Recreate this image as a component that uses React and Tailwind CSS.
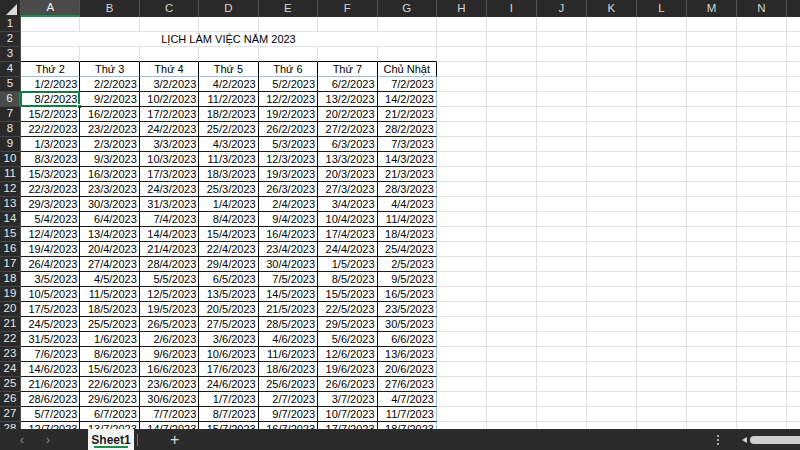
import { useMemo } from "react"

const LETTERS = ["A", "B", "C", "D", "E", "F", "G", "H", "I", "J", "K", "L", "M", "N", "O"]
const DAYS = ["Thứ 2", "Thứ 3", "Thứ 4", "Thứ 5", "Thứ 6", "Thứ 7", "Chủ Nhật"]

function colWidth(i) {
	return i < 7 ? "w-[59.43px]" : "w-[50px]"
}

function fmt(i) {
	const d = new Date(Date.UTC(2023, 1, 1 + i))
	return `${d.getUTCDate()}/${d.getUTCMonth() + 1}/${d.getUTCFullYear()}`
}

function RowHead({ n, active }) {
	return (
		<div
			className={`${active ? "bg-[#4b4b4b] border-r-2 border-r-[#1e8c4e]" : "bg-[#2a2a2a] border-r border-r-[#505050]"} w-[21px] shrink-0 h-full flex items-center justify-center text-[#e6e6e6] text-[11.5px] border-b border-b-[#454545]`}
		>
			{n}
		</div>
	)
}

function Cell({ i, row, children }) {
	// borders of the bordered block A4:G28
	let border = "border-r border-b border-[#e1e1e1]"
	let align = "justify-end pr-[2px]"
	if (row === 3 && i < 7) border = "border-r border-[#e1e1e1] border-b border-b-black"
	if (row === 4 && i < 7) {
		border = "border-r border-r-black border-b border-b-[#9dbfe4]"
		align = "justify-center"
	}
	if (row >= 5 && i < 7) {
		border = `border-r ${i === 6 ? "border-r-[#9dbfe4]" : "border-r-black"} border-b border-b-[#1a1a1a]`
	}
	return (
		<div
			className={`${colWidth(i)} shrink-0 h-full flex items-center ${align} ${border} relative pt-[1px]`}
		>
			{children}
			{row === 6 && i === 0 && (
				<div className="absolute -left-[1px] -top-[1px] -right-[1px] -bottom-[1px] border-2 border-[#107c41]">
					<div className="absolute -right-[4px] -bottom-[4px] w-[5px] h-[5px] bg-[#107c41] border border-white"></div>
				</div>
			)}
		</div>
	)
}

function App() {
	const rows = useMemo(() => {
		const out = []
		for (let r = 1; r <= 28; r++) out.push(r)
		return out
	}, [])

	return (
		<div className="w-[800px] h-[450px] flex flex-col bg-white overflow-hidden font-['Liberation_Sans',Arial,sans-serif] text-black">
			<div className="flex-1 overflow-hidden">
				{/* column letters */}
				<div className="flex h-[17px] bg-[#2a2a2a]">
					<div className="w-[21px] shrink-0 h-full flex items-end justify-end pr-[3px] pb-[2px] border-r border-[#505050]">
						<svg width="11" height="11" viewBox="0 0 11 11">
							<polygon points="11,0 11,11 0,11" fill="#d9d9d9" />
						</svg>
					</div>
					{LETTERS.map((l, i) => (
						<div
							key={l}
							className={`${colWidth(i)} shrink-0 h-full flex items-center justify-center text-[11.5px] ${i === 0 ? "bg-[#4b4b4b] text-[#f0f0f0] border-b-2 border-b-[#1e8c4e]" : "text-[#d6d6d6]"} border-r border-r-[#555555]`}
						>
							{l}
						</div>
					))}
				</div>

				{rows.map((r) => (
					<div key={r} className="flex h-[15px] text-[11px] leading-none">
						<RowHead n={r} active={r === 6} />
						{r === 2 ? (
							<>
								<div className="w-[416.01px] shrink-0 h-full flex items-center justify-center border-r border-b border-[#e1e1e1] pt-[1px]">
									LỊCH LÀM VIỆC NĂM 2023
								</div>
								{LETTERS.slice(7).map((l, j) => (
									<Cell key={l} i={j + 7} row={r} />
								))}
							</>
						) : (
							LETTERS.map((l, i) => (
								<Cell key={l} i={i} row={r}>
									{r === 4 && i < 7 && DAYS[i]}
									{r >= 5 && i < 7 && fmt((r - 5) * 7 + i)}
								</Cell>
							))
						)}
					</div>
				))}
			</div>

			{/* sheet tabs */}
			<div className="h-[21px] shrink-0 bg-[#2b2b2b] flex items-center relative">
				<div className="w-[88px] flex items-center h-full">
					<span className="w-[44px] text-center text-[#8c8c8c] text-[13px]">‹</span>
					<span className="w-[8px] text-center text-[#8c8c8c] text-[13px]">›</span>
				</div>
				<div className="h-full w-[46px] bg-[#f5f5f5] flex flex-col items-center justify-center relative">
					<span className="text-[12px] font-semibold text-[#1a1a1a] leading-none">Sheet1</span>
					<div className="absolute bottom-[2px] left-[6px] right-[6px] h-[2px] bg-[#1e8c4e]"></div>
				</div>
				<div className="w-px h-[12px] bg-[#6a6a6a] ml-[3px]"></div>
				<span className="ml-[32px] text-[#d8d8d8] text-[16px] leading-none">+</span>
				<div className="ml-auto flex items-center h-full">
					<svg width="4" height="12" viewBox="0 0 4 12" className="mr-[20px]">
						<circle cx="2" cy="2" r="1.1" fill="#c8c8c8" />
						<circle cx="2" cy="6" r="1.1" fill="#c8c8c8" />
						<circle cx="2" cy="10" r="1.1" fill="#c8c8c8" />
					</svg>
					<svg width="8" height="8" viewBox="0 0 8 8" className="mr-[2px]">
						<polygon points="2,4 7,1 7,7" fill="#d0d0d0" />
					</svg>
					<div className="w-[50px] h-[8px] rounded-l-full bg-[#cfcfcf]"></div>
				</div>
			</div>
		</div>
	)
}

export default App
